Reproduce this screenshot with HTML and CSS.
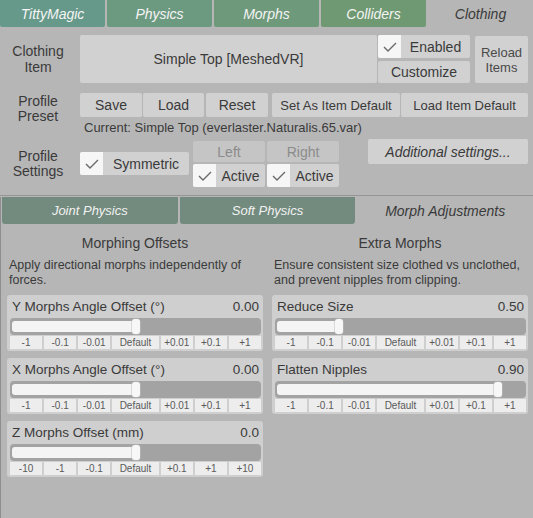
FILE: index.html
```html
<!DOCTYPE html>
<html>
<head>
<meta charset="utf-8">
<link rel="stylesheet" href="styles.css">
</head>
<body>
<div class="tabs">
  <div class="tab t1">TittyMagic</div>
  <div class="tab t2">Physics</div>
  <div class="tab t3">Morphs</div>
  <div class="tab t4">Colliders</div>
  <div class="tab active">Clothing</div>
</div>

<div class="top">
  <div class="row r1">
    <div class="label">Clothing<br>Item</div>
    <div class="itembox">Simple Top [MeshedVR]</div>
    <div class="stack">
      <div class="toggle"><span class="check"><svg width="14" height="10" viewBox="0 0 14 10"><polyline points="1,5 5,9 13,1" fill="none" stroke="#6a6a6a" stroke-width="1.4"/></svg></span><span class="tl">Enabled</span></div>
      <div class="btn cust">Customize</div>
    </div>
    <div class="btn reload">Reload<br>Items</div>
  </div>

  <div class="row r2">
    <div class="label lab2">Profile<br>Preset</div>
    <div class="presetcol">
      <div class="btnrow">
        <div class="btn b-save">Save</div>
        <div class="btn b-load">Load</div>
        <div class="btn b-reset">Reset</div>
        <div class="btn b-set">Set As Item Default</div>
        <div class="btn b-lid">Load Item Default</div>
      </div>
      <div class="current">Current: Simple Top (everlaster.Naturalis.65.var)</div>
    </div>
  </div>

  <div class="row r3">
    <div class="label lab3">Profile<br>Settings</div>
    <div class="toggle sym"><span class="check"><svg width="14" height="10" viewBox="0 0 14 10"><polyline points="1,5 5,9 13,1" fill="none" stroke="#6a6a6a" stroke-width="1.4"/></svg></span><span class="tl">Symmetric</span></div>
    <div class="side">
      <div class="sidehead">Left</div>
      <div class="toggle"><span class="check"><svg width="14" height="10" viewBox="0 0 14 10"><polyline points="1,5 5,9 13,1" fill="none" stroke="#6a6a6a" stroke-width="1.4"/></svg></span><span class="tl">Active</span></div>
    </div>
    <div class="side">
      <div class="sidehead">Right</div>
      <div class="toggle"><span class="check"><svg width="14" height="10" viewBox="0 0 14 10"><polyline points="1,5 5,9 13,1" fill="none" stroke="#6a6a6a" stroke-width="1.4"/></svg></span><span class="tl">Active</span></div>
    </div>
    <div class="btn addl">Additional settings...</div>
  </div>
</div>

<div class="lower">
  <div class="subtabs">
    <div class="subtab">Joint Physics</div>
    <div class="subtab">Soft Physics</div>
    <div class="subtab active">Morph Adjustments</div>
  </div>

  <div class="cols">
    <div class="col">
      <div class="colhead">Morphing Offsets</div>
      <div class="desc">Apply directional morphs independently of forces.</div>

      <div class="card">
        <div class="cardhead"><span>Y Morphs Angle Offset (°)</span><span>0.00</span></div>
        <div class="track"><div class="fill" style="width:50%"></div><div class="handle" style="left:50%"></div></div>
        <div class="steps"><span>-1</span><span>-0.1</span><span>-0.01</span><span>Default</span><span>+0.01</span><span>+0.1</span><span>+1</span></div>
      </div>

      <div class="card">
        <div class="cardhead"><span>X Morphs Angle Offset (°)</span><span>0.00</span></div>
        <div class="track"><div class="fill" style="width:50%"></div><div class="handle" style="left:50%"></div></div>
        <div class="steps"><span>-1</span><span>-0.1</span><span>-0.01</span><span>Default</span><span>+0.01</span><span>+0.1</span><span>+1</span></div>
      </div>

      <div class="card">
        <div class="cardhead"><span>Z Morphs Offset (mm)</span><span>0.0</span></div>
        <div class="track"><div class="fill" style="width:50%"></div><div class="handle" style="left:50%"></div></div>
        <div class="steps"><span>-10</span><span>-1</span><span>-0.1</span><span>Default</span><span>+0.1</span><span>+1</span><span>+10</span></div>
      </div>
    </div>

    <div class="col">
      <div class="colhead">Extra Morphs</div>
      <div class="desc">Ensure consistent size clothed vs unclothed, and prevent nipples from clipping.</div>

      <div class="card">
        <div class="cardhead"><span>Reduce Size</span><span>0.50</span></div>
        <div class="track"><div class="fill" style="width:25.5%"></div><div class="handle" style="left:25.5%"></div></div>
        <div class="steps"><span>-1</span><span>-0.1</span><span>-0.01</span><span>Default</span><span>+0.01</span><span>+0.1</span><span>+1</span></div>
      </div>

      <div class="card">
        <div class="cardhead"><span>Flatten Nipples</span><span>0.90</span></div>
        <div class="track"><div class="fill" style="width:89%"></div><div class="handle" style="left:89%"></div></div>
        <div class="steps"><span>-1</span><span>-0.1</span><span>-0.01</span><span>Default</span><span>+0.01</span><span>+0.1</span><span>+1</span></div>
      </div>
    </div>
  </div>
</div>
</body>
</html>
```

FILE: styles.css
```css
* { box-sizing: border-box; }
html, body {
  margin: 0;
  padding: 0;
}
body {
  width: 533px;
  height: 518px;
  overflow: hidden;
  background: #b6b6b6;
  font-family: "Liberation Sans", Arial, sans-serif;
  color: #3a3a3a;
}

/* top tabs */
.tabs {
  display: flex;
  gap: 2px;
  height: 27px;
}
.tab {
  flex: 1;
  display: flex;
  align-items: center;
  justify-content: center;
  font-size: 14px;
  font-style: italic;
  color: #f4f4f4;
  border-radius: 0 0 2px 2px;
}
.t1 { background: #66998a; }
.t2 { background: #6c9a81; }
.t3 { background: #6e997a; }
.t4 { background: #6f9972; }
.tab.active { background: transparent; color: #3a3a3a; }

/* top section */
.top {
  padding: 8px 5px 0 0;
  border-bottom: 1px solid #959595;
  height: 169px;
}
.row { display: flex; }
.label {
  width: 80px;
  flex: none;
  text-align: center;
  font-size: 14px;
  line-height: 16px;
  padding-right: 4px;
}
.r1 { height: 48px; align-items: center; }
.itembox {
  width: 297px;
  height: 48px;
  margin-right: 1px;
  background: #d1d1d1;
  border-radius: 2px;
  display: flex;
  align-items: center;
  justify-content: center;
  font-size: 14px;
}
.stack {
  width: 92px;
  height: 48px;
  display: flex;
  flex-direction: column;
  justify-content: space-between;
}
.btn {
  background: #d1d1d1;
  border-radius: 2px;
  display: flex;
  align-items: center;
  justify-content: center;
  text-align: center;
  font-size: 14px;
}
.cust { height: 22px; }
.reload {
  width: 53px;
  height: 47px;
  margin-left: 5px;
  line-height: 15px;
  font-size: 13px;
  color: #4a4a4a;
  align-self: flex-start;
  margin-top: 1px;
}
.toggle {
  display: flex;
  height: 23px;
  background: #d1d1d1;
  border-radius: 2px;
  overflow: hidden;
}
.check {
  width: 23px;
  flex: none;
  background: #f6f6f6;
  display: flex;
  align-items: center;
  justify-content: center;
}
.tl {
  flex: 1;
  display: flex;
  align-items: center;
  justify-content: center;
  font-size: 14px;
}

.r2 { margin-top: 10px; }
.lab2 { padding-top: 1px; line-height: 15px; }
.presetcol { display: flex; flex-direction: column; }
.btnrow { display: flex; height: 24px; }
.btnrow .btn { height: 24px; }
.b-save { width: 62px; }
.b-load { width: 61px; margin-left: 1px; }
.b-reset { width: 62px; margin-left: 2px; }
.b-set { width: 128px; margin-left: 4px; font-size: 13px; }
.b-lid { width: 127px; margin-left: 1px; font-size: 13px; }
.current {
  font-size: 13px;
  line-height: 16px;
  margin-top: 3px;
  padding-left: 4px;
}

.r3 { margin-top: 3px; height: 49px; }
.lab3 { align-self: center; line-height: 15px; }
.sym { width: 109px; align-self: center; }
.side {
  width: 72px;
  display: flex;
  flex-direction: column;
  gap: 2px;
  margin-top: 2px;
}
.sym + .side { margin-left: 4px; }
.side + .side { margin-left: 2px; }
.sidehead {
  height: 21px;
  background: #c5c5c5;
  color: #8c8c8c;
  border-radius: 2px;
  display: flex;
  align-items: center;
  justify-content: center;
  font-size: 14px;
}
.addl {
  width: 160px;
  height: 25px;
  margin-left: 29px;
  font-style: italic;
  font-size: 14px;
}

/* lower */
.lower {
  margin-top: 1px;
  border-left: 1px solid #8e8e8e;
  height: 323px;
}
.subtabs {
  display: flex;
  height: 27px;
  gap: 2px;
  padding-left: 1px;
}
.subtab {
  flex: 1;
  display: flex;
  align-items: center;
  justify-content: center;
  background: #728b7e;
  color: #f2f2f2;
  font-style: italic;
  font-size: 13px;
  border-radius: 0 0 3px 3px;
}
.subtab.active { background: transparent; color: #3a3a3a; font-size: 14px; }

.cols {
  display: flex;
  gap: 9px;
  padding: 0 5px 0 6px;
}
.col {
  width: 256px;
  display: flex;
  flex-direction: column;
  gap: 7px;
}
.colhead {
  text-align: center;
  font-size: 14px;
  line-height: 20px;
  margin-top: 9px;
  margin-bottom: -2px;
}
.desc {
  font-size: 12.5px;
  line-height: 15px;
  padding: 0 2px 0 2px;
  margin-bottom: 0px;
}

.card {
  background: #cfcfcf;
  border-radius: 3px;
  height: 56px;
  padding: 0 2px 0 3px;
  display: flex;
  flex-direction: column;
}
.cardhead {
  height: 23px;
  display: flex;
  justify-content: space-between;
  align-items: center;
  font-size: 13.5px;
  padding: 0 2px 0 2px;
}
.track {
  position: relative;
  height: 17px;
  background: #a3a3a3;
  border-radius: 4px;
}
.fill {
  position: absolute;
  left: 2px;
  top: 3px;
  bottom: 3px;
  background: #f4f4f4;
  border-radius: 3px 0 0 3px;
}
.handle {
  position: absolute;
  top: 1px;
  bottom: 1px;
  width: 8px;
  margin-left: -4px;
  background: #f7f7f7;
  border-radius: 3px;
  box-shadow: 0 0 0 0.5px #bdbdbd;
}
.steps {
  display: grid;
  grid-template-columns: 1fr 1fr 1fr 1.45fr 1fr 1fr 1fr;
  gap: 2px;
  height: 13px;
  margin-top: 1px;
}
.steps span {
  background: #ededed;
  display: flex;
  align-items: center;
  justify-content: center;
  font-size: 10px;
  color: #5a5a5a;
}
```
